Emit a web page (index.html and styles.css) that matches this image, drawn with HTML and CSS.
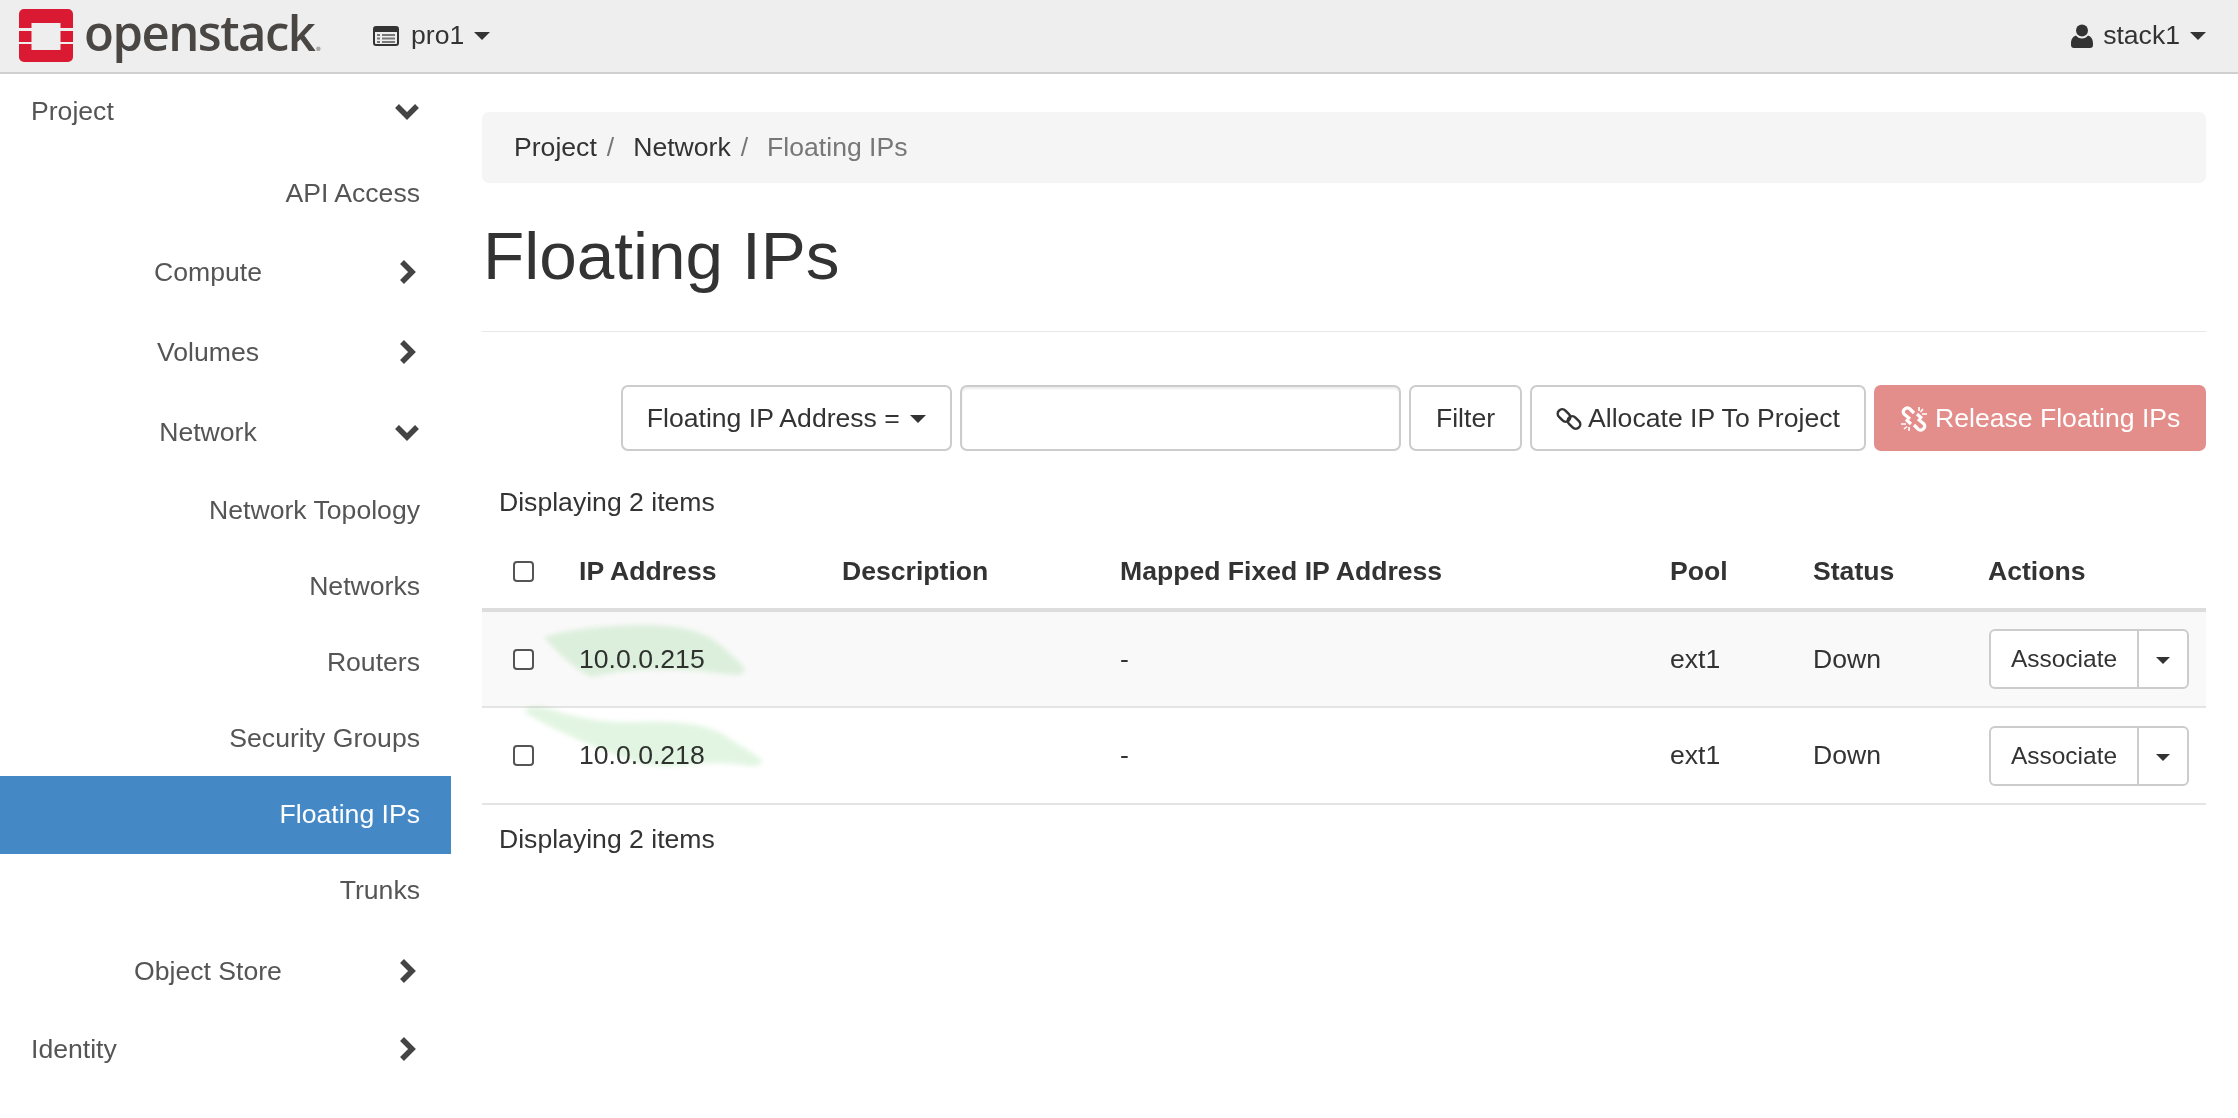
FILE: index.html
```html
<!DOCTYPE html>
<html lang="en">
<head>
  <meta charset="UTF-8">
  <title>Floating IPs - OpenStack Dashboard</title>
  <link rel="stylesheet" href="styles.css">
</head>
<body>
  <header class="topbar">
    <svg class="logo-mark" viewBox="0 0 54 53" width="54" height="53">
      <path fill="#da1a32" d="M5 0H49a5 5 0 0 1 5 5V19H41.500V14H12.500V19H0V5a5 5 0 0 1 5-5Z"/>
      <rect fill="#da1a32" x="0" y="22" width="12.500" height="11"/>
      <rect fill="#da1a32" x="41.500" y="22" width="12.500" height="11"/>
      <path fill="#da1a32" d="M0 35H12.500V41H41.500V35H54V48a5 5 0 0 1-5 5H5a5 5 0 0 1-5-5Z"/>
    </svg>
    <span class="logo-text">openstack<span class="logo-dot">.</span></span>
    <div class="project-menu">
      <svg class="icon-list" viewBox="0 0 26 20" width="26" height="20">
        <rect x="1" y="1" width="24" height="18" rx="2" fill="#eee" stroke="#333" stroke-width="2"/>
        <rect x="1" y="1" width="24" height="5" fill="#333"/>
        <path d="M4 9H7M9 9H22M4 12.500H7M9 12.500H22M4 16H7M9 16H22" stroke="#777" stroke-width="2"/>
      </svg>
      <span>pro1</span>
      <span class="caret"></span>
    </div>
    <div class="user-menu">
      <svg class="icon-user" viewBox="0 0 22 24" width="22" height="24">
        <circle cx="11" cy="6.500" r="6" fill="#333"/>
        <path fill="#333" d="M5 11.500C2 12.500 0 15 0 19.500V21a3 3 0 0 0 3 3H19a3 3 0 0 0 3-3V19.500C22 15 20 12.500 17 11.500C15.500 13.500 13.500 14.500 11 14.500S6.500 13.500 5 11.500Z"/>
      </svg>
      <span>stack1</span>
      <span class="caret"></span>
    </div>
  </header>

  <div class="page">
    <nav class="sidebar">
      <div class="nav-group nav-first">
        <span>Project</span>
        <svg class="chevron" viewBox="0 0 24 24"><path d="M2 7L12 17L22 7"/></svg>
      </div>
      <a class="nav-child nav-api">API Access</a>
      <div class="nav-sub">
        <span>Compute</span>
        <svg class="chevron" viewBox="0 0 24 24"><path d="M7 2L17 12L7 22"/></svg>
      </div>
      <div class="nav-sub">
        <span>Volumes</span>
        <svg class="chevron" viewBox="0 0 24 24"><path d="M7 2L17 12L7 22"/></svg>
      </div>
      <div class="nav-sub">
        <span>Network</span>
        <svg class="chevron" viewBox="0 0 24 24"><path d="M2 7L12 17L22 7"/></svg>
      </div>
      <a class="nav-child">Network Topology</a>
      <a class="nav-child">Networks</a>
      <a class="nav-child">Routers</a>
      <a class="nav-child">Security Groups</a>
      <a class="nav-child active">Floating IPs</a>
      <a class="nav-child">Trunks</a>
      <div class="nav-sub nav-store">
        <span>Object Store</span>
        <svg class="chevron" viewBox="0 0 24 24"><path d="M7 2L17 12L7 22"/></svg>
      </div>
      <div class="nav-group">
        <span>Identity</span>
        <svg class="chevron" viewBox="0 0 24 24"><path d="M7 2L17 12L7 22"/></svg>
      </div>
    </nav>

    <main class="content">
      <ol class="breadcrumb">
        <li>Project</li>
        <li class="sep">/</li>
        <li>Network</li>
        <li class="sep">/</li>
        <li class="current">Floating IPs</li>
      </ol>

      <h1 class="page-title">Floating IPs</h1>

      <div class="toolbar">
        <button class="btn btn-select">Floating IP Address = <span class="caret"></span></button>
        <input class="filter-input" type="text">
        <button class="btn btn-filter">Filter</button>
        <button class="btn btn-allocate">
          <svg class="icon-link" viewBox="0 0 26 26" width="26" height="26">
            <rect x="1" y="5" width="14" height="9" rx="4.500" transform="rotate(45 8 9.500)"/>
            <rect x="11" y="12" width="14" height="9" rx="4.500" transform="rotate(45 18 16.500)"/>
          </svg>
          Allocate IP To Project
        </button>
        <button class="btn btn-release">
          <svg class="icon-unlink" viewBox="0 0 28 26" width="28" height="26">
            <path d="M10 13L4 8A4 4 0 0 1 9.500 2.500L14 7"/>
            <path d="M18 13L24 18A4 4 0 0 1 18.500 23.500L14 19"/>
            <path d="M6 13.500L11 18M17 8L22 12.500"/>
            <path class="spark" d="M19 1V5M23 3L20.500 6M27 8H22M1 18H6M4 23L7 20.500M9 25V21"/>
          </svg>
          Release Floating IPs
        </button>
      </div>

      <div class="table-count">Displaying 2 items</div>

      <div class="table-wrap">
        <table class="ip-table">
          <colgroup>
            <col class="col-check">
            <col class="col-ip">
            <col class="col-desc">
            <col class="col-mapped">
            <col class="col-pool">
            <col class="col-status">
            <col class="col-actions">
          </colgroup>
          <thead>
            <tr>
              <th class="cell-check"><input type="checkbox" class="check"></th>
              <th>IP Address</th>
              <th>Description</th>
              <th>Mapped Fixed IP Address</th>
              <th>Pool</th>
              <th>Status</th>
              <th>Actions</th>
            </tr>
          </thead>
          <tbody>
            <tr class="striped">
              <td class="cell-check"><input type="checkbox" class="check"></td>
              <td>10.0.0.215</td>
              <td></td>
              <td>-</td>
              <td>ext1</td>
              <td>Down</td>
              <td>
                <div class="btn-group">
                  <button class="btn-sm">Associate</button>
                  <button class="btn-sm btn-toggle"><span class="caret"></span></button>
                </div>
              </td>
            </tr>
            <tr>
              <td class="cell-check"><input type="checkbox" class="check"></td>
              <td>10.0.0.218</td>
              <td></td>
              <td>-</td>
              <td>ext1</td>
              <td>Down</td>
              <td>
                <div class="btn-group">
                  <button class="btn-sm">Associate</button>
                  <button class="btn-sm btn-toggle"><span class="caret"></span></button>
                </div>
              </td>
            </tr>
          </tbody>
        </table>
        <!-- green marker strokes over the two addresses -->
        <svg class="smears" viewBox="0 0 300 280" width="300" height="280">
          <path d="M65 97C90 89 130 85 167 85C195 85 220 90 235 100C250 112 258 120 265 127C266 132 263 135 258 135C240 134 225 130 200 130C165 129 140 130 113 137C100 132 80 115 65 97Z"/>
          <path d="M45 172C50 165 60 165 83 173C110 180 130 183 160 182C195 181 225 183 245 195C260 205 275 213 283 220C283 225 280 226 270 226C250 222 230 222 200 226C175 228 150 222 133 213C110 205 75 190 45 172Z"/>
        </svg>
      </div>

      <div class="table-count table-count-foot">Displaying 2 items</div>
    </main>
  </div>
</body>
</html>
```

FILE: styles.css
```css
* {
  box-sizing: border-box;
}
html, body {
  height: 100%;
}
body {
  margin: 0;
  overflow: hidden;
  background: #fff;
  color: #333;
  font-family: "Liberation Sans", Arial, sans-serif;
  font-size: 26.6px;
}

/* top bar */
.topbar {
  display: flex;
  align-items: center;
  height: 74px;
  padding: 0 32px 1px 19px;
  background: #eee;
  border-bottom: 2px solid #d0d0d0;
}
.logo-mark {
  flex: none;
}
.logo-text {
  flex: none;
  width: 290px;
  margin-left: 11px;
  margin-top: -8px;
  font-family: "Open Sans", sans-serif;
  font-size: 49px;
  font-weight: 600;
  letter-spacing: -1.500px;
  color: #4a4643;
}
.logo-dot {
  color: #aaa;
  font-size: 30px;
}
.project-menu {
  display: flex;
  align-items: center;
  margin-left: -1px;
}
.icon-list {
  margin-right: 12px;
}
.user-menu {
  display: flex;
  align-items: center;
  margin-left: auto;
}
.icon-user {
  margin-right: 10px;
}
.caret {
  display: inline-block;
  width: 0;
  height: 0;
  margin-left: 10px;
  vertical-align: middle;
  border-top: 8px solid #333;
  border-left: 8px solid transparent;
  border-right: 8px solid transparent;
}

/* layout */
.page {
  display: flex;
}
.sidebar {
  flex: none;
  width: 451px;
  color: #555;
}
.content {
  flex: 1;
  padding: 38px 32px 0 31px;
}

/* sidebar rows */
.nav-group {
  display: flex;
  align-items: center;
  justify-content: space-between;
  height: 78px;
  padding: 0 32px 0 31px;
}
.nav-first {
  height: 74px;
  margin-bottom: 7px;
}
.nav-api {
  margin-bottom: 1px;
}
.nav-sub {
  display: flex;
  align-items: center;
  height: 80px;
  padding: 0 32px 0 21px;
}
.nav-sub span {
  flex: 1;
  text-align: center;
}
.nav-store {
  height: 78px;
  margin-top: 4px;
}
.nav-child {
  display: block;
  height: 76px;
  padding-right: 31px;
  line-height: 76px;
  text-align: right;
}
.nav-child.active {
  height: 78px;
  margin-bottom: -2px;
  background: #4488c6;
  color: #fff;
}
.chevron {
  flex: none;
  width: 24px;
  height: 24px;
  fill: none;
  stroke: #444;
  stroke-width: 5.500;
}

/* breadcrumb and title */
.breadcrumb {
  display: flex;
  align-items: center;
  height: 71px;
  margin: 0;
  padding: 0 32px;
  list-style: none;
  background: #f5f5f5;
  border-radius: 7px;
}
.breadcrumb .sep {
  margin: 0 19px 0 10px;
  color: #777;
}
.breadcrumb .current {
  color: #777;
}
.page-title {
  margin: 35px 0 0;
  padding: 0 0 37px 1px;
  font-size: 67.500px;
  font-weight: normal;
  line-height: 76px;
  color: #333;
  border-bottom: 1px solid #e8e8e8;
}

/* filter row */
.toolbar {
  display: flex;
  justify-content: flex-end;
  gap: 8px;
  height: 66px;
  margin-top: 53px;
}
.btn {
  height: 66px;
  padding: 0 24px;
  font: inherit;
  color: #333;
  background: #fff;
  border: 2px solid #ccc;
  border-radius: 7px;
  white-space: nowrap;
}
.btn-select {
  padding: 0;
  width: 331px;
}
.filter-input {
  width: 441px;
  font: inherit;
  border: 2px solid #ccc;
  border-radius: 7px;
  box-shadow: inset 0 2px 2px rgba(0, 0, 0, 0.08);
}
.btn-filter {
  width: 113px;
  padding: 0;
}
.btn-allocate {
  width: 336px;
  padding: 0;
}
.btn-release {
  width: 332px;
  padding: 0;
  color: #fff;
  background: #e48e8c;
  border-color: #e48e8c;
}
.btn-select .caret {
  margin-left: 3px;
}
.icon-link, .icon-unlink {
  vertical-align: -5px;
}
.icon-link rect {
  fill: none;
  stroke: #333;
  stroke-width: 2.500;
}
.icon-unlink path {
  fill: none;
  stroke: #fff;
  stroke-width: 3.200;
}
.icon-unlink .spark {
  stroke-width: 1.600;
}

/* table */
.table-count {
  height: 34px;
  margin-top: 34px;
  padding-left: 17px;
  line-height: 34px;
}
.table-count-foot {
  margin-top: 17px;
}
.table-wrap {
  position: relative;
}
.ip-table {
  width: 100%;
  margin-top: 16px;
  border-collapse: collapse;
  table-layout: fixed;
}
.col-check { width: 82px; }
.col-ip { width: 263px; }
.col-desc { width: 278px; }
.col-mapped { width: 550px; }
.col-pool { width: 143px; }
.col-status { width: 175px; }
.ip-table th {
  height: 75px;
  padding: 0 15px;
  text-align: left;
  font-weight: bold;
  border-bottom: 4px solid #ddd;
}
.ip-table td {
  height: 97px;
  padding: 0 15px;
  border-bottom: 2px solid #e4e4e4;
}
.ip-table .cell-check {
  padding-left: 31px;
  padding-right: 0;
}
.striped td {
  background: #f9f9f9;
}
.check {
  display: block;
  width: 21px;
  height: 21px;
  margin: 0;
  appearance: none;
  background: #fff;
  border: 2px solid #555;
  border-radius: 4px;
}
.btn-group {
  display: flex;
  width: 200px;
  height: 60px;
  margin-left: 1px;
}
.btn-sm {
  width: 150px;
  padding: 0;
  font: inherit;
  font-size: 24.500px;
  color: #333;
  background: #fff;
  border: 2px solid #ccc;
  border-radius: 6px 0 0 6px;
}
.btn-toggle {
  width: 52px;
  margin-left: -2px;
  border-radius: 0 6px 6px 0;
}
.btn-toggle .caret {
  margin-left: 0;
  border-top-width: 7px;
  border-left-width: 7px;
  border-right-width: 7px;
}
.smears {
  position: absolute;
  left: -3px;
  top: 5px;
  pointer-events: none;
  mix-blend-mode: multiply;
}
.smears path {
  fill: #e2f5e2;
  filter: blur(2.500px);
}
```
